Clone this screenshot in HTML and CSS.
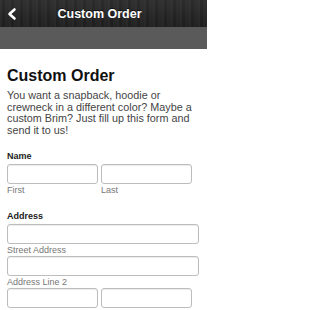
FILE: index.html
```html
<!DOCTYPE html>
<html>
<head>
<meta charset="utf-8">
<meta name="viewport" content="width=207">
<link rel="stylesheet" href="styles.css">
</head>
<body>
<div class="page">
<header class="topbar">
  <div class="back">
    <svg width="22" height="27" viewBox="0 0 22 27"><polyline points="14.5,9.5 9.5,14 14.5,18.5" fill="none" stroke="#fff" stroke-width="2.6" stroke-linecap="round" stroke-linejoin="round"/></svg>
  </div>
  <div class="title">Custom Order</div>
  <div></div>
</header>
<div class="subbar"></div>
<main class="content">
  <h1 class="heading">Custom Order</h1>
  <p class="intro">You want a snapback, hoodie or crewneck in a different color? Maybe a custom Brim? Just fill up this form and send it to us!</p>

  <section class="field">
    <div class="label">Name</div>
    <div class="pair">
      <div class="sub"><div class="input"></div><div class="hint">First</div></div>
      <div class="sub"><div class="input"></div><div class="hint">Last</div></div>
    </div>
  </section>

  <section class="field">
    <div class="label">Address</div>
    <div class="input"></div><div class="hint">Street Address</div>
    <div class="input"></div><div class="hint">Address Line 2</div>
    <div class="pair">
      <div class="sub"><div class="input"></div></div>
      <div class="sub"><div class="input"></div></div>
    </div>
  </section>
</main>
</div>
</body>
</html>
```
FILE: styles.css
```css
html, body {
  margin: 0;
  padding: 0;
  background: #fff;
  font-family: "Liberation Sans", Arial, Helvetica, sans-serif;
  overflow: hidden;
}
.page {
  width: 207px;
  height: 310px;
  overflow: hidden;
}
.topbar {
  height: 27px;
  display: grid;
  grid-template-columns: 22px 1fr 30px;
  align-items: center;
  background:
    repeating-linear-gradient(90deg, rgba(255,255,255,0.03) 0 2px, rgba(0,0,0,0.05) 2px 5px, rgba(255,255,255,0.02) 5px 9px),
    linear-gradient(#2e2e2e, #1f1f1f);
}
.back {
  height: 27px;
  display: flex;
}
.title {
  text-align: center;
  color: #fff;
  font-weight: bold;
  font-size: 12.5px;
  text-shadow: 0 -1px 0 rgba(0,0,0,0.6);
}
.subbar {
  height: 22px;
  background: #5a5a5a;
}
.content {
  padding: 0 8px 0 7px;
}
.heading {
  margin: 17px 0 0;
  font-size: 16px;
  line-height: 20px;
  font-weight: bold;
  color: #111;
}
.intro {
  margin: 4px 0 0;
  font-size: 10.8px;
  line-height: 11.6px;
  color: #444;
}
.field {
  margin-top: 15px;
}
.label {
  font-size: 9px;
  line-height: 11px;
  font-weight: bold;
  color: #222;
  margin-bottom: 2px;
}
.pair {
  display: grid;
  grid-template-columns: 91px 91px;
  column-gap: 3px;
}
.input {
  height: 18px;
  border: 1px solid #bdbdbd;
  border-radius: 3px;
  background: #fff;
  box-shadow: inset 0 1px 1px rgba(0,0,0,0.08);
}
.hint {
  font-size: 9px;
  line-height: 11px;
  color: #777;
  margin-top: 1px;
}
```
